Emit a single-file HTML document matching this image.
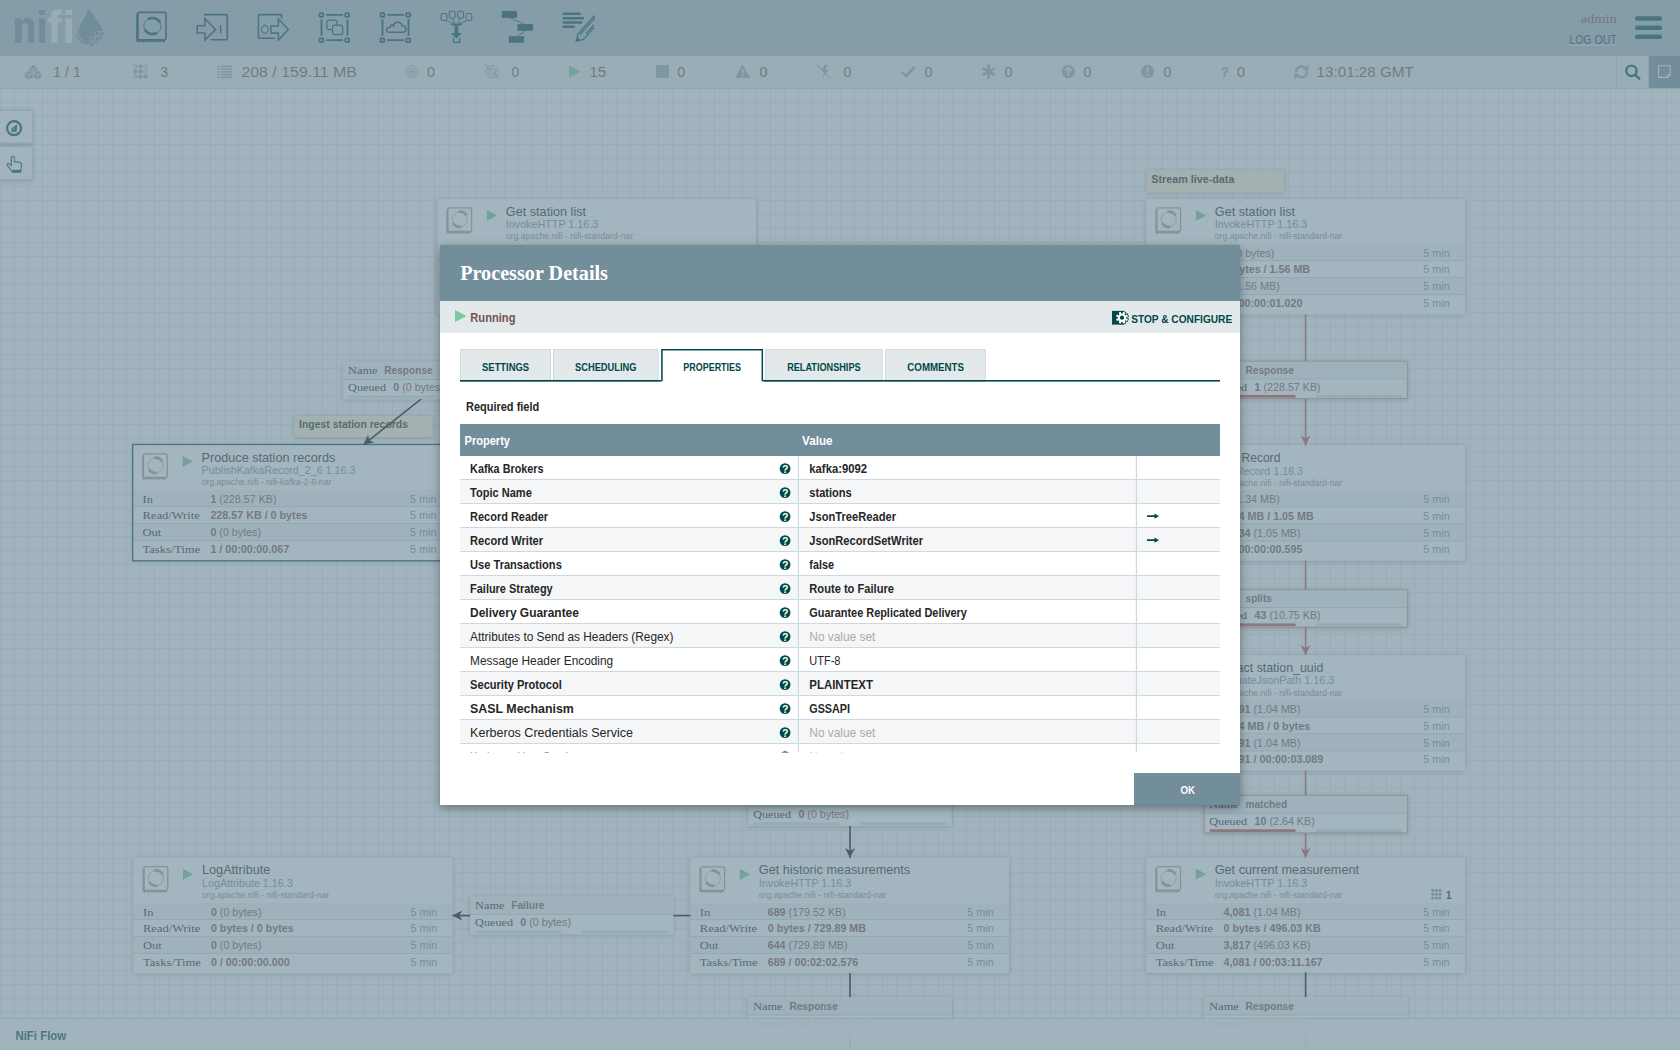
<!DOCTYPE html><html><head><meta charset="utf-8"><title>NiFi Flow</title><style>
*{margin:0;padding:0;box-sizing:border-box}
html,body{width:1680px;height:1050px;overflow:hidden;background:#f9fafb;font-family:"Liberation Sans",sans-serif}
.abs{position:absolute}
svg{position:absolute;left:0;top:0;overflow:visible}
text.a{font-family:"Liberation Sans",sans-serif}
text.b{font-family:"Liberation Serif",serif}
#canvas{left:0;top:88px;width:1680px;height:962px;background-color:#f9fafb;
 background-image:linear-gradient(to right,#e4e9ec 1px,transparent 1px),linear-gradient(to bottom,#e4e9ec 1px,transparent 1px);
 background-size:14px 14px;background-position:0 0}
#header{left:0;top:0;width:1680px;height:56px;background:#aabbc3}
#status{left:0;top:56px;width:1680px;height:33px;background:#e3e8eb;border-bottom:1px solid #c7d2d7}
#crumbs{left:0;top:1018px;width:1680px;height:32px;background:rgba(249,250,251,0.92);border-top:1px solid #c7d2d7}
#glass{left:0;top:0;width:1680px;height:1050px;background:rgba(114,142,155,0.65)}
#dialog{left:440px;top:245px;width:800px;height:560px;background:#fff;box-shadow:0 3px 9px rgba(0,0,0,0.36)}
</style></head><body>
<div id="canvas" class="abs"></div>
<svg width="1680" height="1050" viewBox="0 0 1680 1050">
<defs><filter id="ds" x="-10%" y="-20%" width="120%" height="150%"><feDropShadow dx="0" dy="0.6" stdDeviation="2.4" flood-color="#000" flood-opacity="0.34"/></filter><marker id="arrD" markerWidth="10" markerHeight="10" refX="10" refY="5" orient="auto" markerUnits="userSpaceOnUse"><path d="M0 0 L10 5 L0 10 L3 5 Z" fill="#000"/></marker><marker id="arrR" markerWidth="10" markerHeight="10" refX="10" refY="5" orient="auto" markerUnits="userSpaceOnUse"><path d="M0 0 L10 5 L0 10 L3 5 Z" fill="#ba554a"/></marker></defs>
<rect x="1146.7" y="170.5" width="137.3" height="21.6" fill="#fff7d7" filter="url(#ds)"/>
<text class="a" x="1151.3" y="182.7" font-size="11" font-weight="bold" fill="#262626" textLength="83.10" lengthAdjust="spacingAndGlyphs">Stream live-data</text>
<rect x="294.5" y="416" width="137.7" height="21" fill="#fff7d7" filter="url(#ds)"/>
<text class="a" x="299.1" y="428.2" font-size="11" font-weight="bold" fill="#262626" textLength="108.90" lengthAdjust="spacingAndGlyphs">Ingest station records</text>
<rect x="437.5" y="199" width="318.5" height="115.3" fill="#fff" filter="url(#ds)"/>
<rect x="437.5" y="244.2" width="318.5" height="16.4" fill="#f4f6f7"/>
<rect x="437.5" y="277.4" width="318.5" height="17.3" fill="#f4f6f7"/>
<rect x="437.5" y="260.3" width="318.5" height="0.8" fill="#c7d2d7"/>
<rect x="437.5" y="277.1" width="318.5" height="0.8" fill="#c7d2d7"/>
<rect x="437.5" y="294.3" width="318.5" height="0.8" fill="#c7d2d7"/>
<g fill="none" stroke="#ad9897"><rect x="447.7" y="207.9" width="23.9" height="23.6" rx="1.8" stroke-width="1.3"/><path d="M447.40000000000003 209.4 V232.2 H470.8" stroke-width="1.9"/><path d="M446.2 210.1 h1.2 M446.2 214.0 h1.2 M446.2 217.9 h1.2 M446.2 221.79999999999998 h1.2 M446.2 225.7 h1.2 M446.2 229.6 h1.2 M448.3 233.2 v1.2 M452.2 233.2 v1.2 M456.1 233.2 v1.2 M460.0 233.2 v1.2 M463.90000000000003 233.2 v1.2 M467.8 233.2 v1.2" stroke-width="1"/><circle cx="459.8" cy="219.29999999999998" r="7.6" stroke-width="0.7"/><path d="M458.48 211.82 A7.6 7.6 0 0 1 466.38 215.50" stroke-width="2.7"/><path d="M461.12 226.78 A7.6 7.6 0 0 1 453.22 223.10" stroke-width="2.7"/></g>
<path d="M486.8 209.9 L497.1 215.4 L486.8 221 Z" fill="#7dc7a0"/>
<text class="a" x="505.8" y="215.5" font-size="12.8" fill="#262626" textLength="80.27" lengthAdjust="spacingAndGlyphs">Get station list</text>
<text class="a" x="505.8" y="228.2" font-size="11.3" fill="#728e9b" textLength="92.46" lengthAdjust="spacingAndGlyphs">InvokeHTTP 1.16.3</text>
<text class="a" x="505.8" y="239.4" font-size="8.9" fill="#8a8a8a" textLength="127.46" lengthAdjust="spacingAndGlyphs">org.apache.nifi - nifi-standard-nar</text>
<text class="b" x="446.8" y="257.0" font-size="11" fill="#262626" textLength="10.45" lengthAdjust="spacingAndGlyphs">In</text>
<text class="a" x="514.7" y="257.0" font-size="11" fill="#775351" textLength="50.67" lengthAdjust="spacingAndGlyphs"><tspan font-weight="bold">0</tspan> (0 bytes)</text>
<text class="a" x="740.7" y="257.0" font-size="11" fill="#728e9b" text-anchor="end" textLength="26.36" lengthAdjust="spacingAndGlyphs">5 min</text>
<text class="b" x="446.8" y="273.4" font-size="11" fill="#262626" textLength="57.29" lengthAdjust="spacingAndGlyphs">Read/Write</text>
<text class="a" x="514.7" y="273.4" font-size="11" font-weight="bold" fill="#775351" textLength="82.86" lengthAdjust="spacingAndGlyphs">0 bytes / 0 bytes</text>
<text class="a" x="740.7" y="273.4" font-size="11" fill="#728e9b" text-anchor="end" textLength="26.36" lengthAdjust="spacingAndGlyphs">5 min</text>
<text class="b" x="446.8" y="290.4" font-size="11" fill="#262626" textLength="18.81" lengthAdjust="spacingAndGlyphs">Out</text>
<text class="a" x="514.7" y="290.4" font-size="11" fill="#775351" textLength="50.67" lengthAdjust="spacingAndGlyphs"><tspan font-weight="bold">0</tspan> (0 bytes)</text>
<text class="a" x="740.7" y="290.4" font-size="11" fill="#728e9b" text-anchor="end" textLength="26.36" lengthAdjust="spacingAndGlyphs">5 min</text>
<text class="b" x="446.8" y="307.0" font-size="11" fill="#262626" textLength="57.89" lengthAdjust="spacingAndGlyphs">Tasks/Time</text>
<text class="a" x="514.7" y="307.0" font-size="11" font-weight="bold" fill="#775351" textLength="78.71" lengthAdjust="spacingAndGlyphs">0 / 00:00:00.000</text>
<text class="a" x="740.7" y="307.0" font-size="11" fill="#728e9b" text-anchor="end" textLength="26.36" lengthAdjust="spacingAndGlyphs">5 min</text>
<rect x="1146.5" y="199" width="318.5" height="115.3" fill="#fff" filter="url(#ds)"/>
<rect x="1146.5" y="244.2" width="318.5" height="16.4" fill="#f4f6f7"/>
<rect x="1146.5" y="277.4" width="318.5" height="17.3" fill="#f4f6f7"/>
<rect x="1146.5" y="260.3" width="318.5" height="0.8" fill="#c7d2d7"/>
<rect x="1146.5" y="277.1" width="318.5" height="0.8" fill="#c7d2d7"/>
<rect x="1146.5" y="294.3" width="318.5" height="0.8" fill="#c7d2d7"/>
<g fill="none" stroke="#ad9897"><rect x="1156.7" y="207.9" width="23.9" height="23.6" rx="1.8" stroke-width="1.3"/><path d="M1156.3999999999999 209.4 V232.2 H1179.8" stroke-width="1.9"/><path d="M1155.2 210.1 h1.2 M1155.2 214.0 h1.2 M1155.2 217.9 h1.2 M1155.2 221.79999999999998 h1.2 M1155.2 225.7 h1.2 M1155.2 229.6 h1.2 M1157.3 233.2 v1.2 M1161.2 233.2 v1.2 M1165.1 233.2 v1.2 M1169.0 233.2 v1.2 M1172.8999999999999 233.2 v1.2 M1176.8 233.2 v1.2" stroke-width="1"/><circle cx="1168.8" cy="219.29999999999998" r="7.6" stroke-width="0.7"/><path d="M1167.48 211.82 A7.6 7.6 0 0 1 1175.38 215.50" stroke-width="2.7"/><path d="M1170.12 226.78 A7.6 7.6 0 0 1 1162.22 223.10" stroke-width="2.7"/></g>
<path d="M1195.8 209.9 L1206.1 215.4 L1195.8 221 Z" fill="#7dc7a0"/>
<text class="a" x="1214.8" y="215.5" font-size="12.8" fill="#262626" textLength="80.27" lengthAdjust="spacingAndGlyphs">Get station list</text>
<text class="a" x="1214.8" y="228.2" font-size="11.3" fill="#728e9b" textLength="92.46" lengthAdjust="spacingAndGlyphs">InvokeHTTP 1.16.3</text>
<text class="a" x="1214.8" y="239.4" font-size="8.9" fill="#8a8a8a" textLength="127.46" lengthAdjust="spacingAndGlyphs">org.apache.nifi - nifi-standard-nar</text>
<text class="b" x="1155.8" y="257.0" font-size="11" fill="#262626" textLength="10.45" lengthAdjust="spacingAndGlyphs">In</text>
<text class="a" x="1223.7" y="257.0" font-size="11" fill="#775351" textLength="50.67" lengthAdjust="spacingAndGlyphs"><tspan font-weight="bold">0</tspan> (0 bytes)</text>
<text class="a" x="1449.7" y="257.0" font-size="11" fill="#728e9b" text-anchor="end" textLength="26.36" lengthAdjust="spacingAndGlyphs">5 min</text>
<text class="b" x="1155.8" y="273.4" font-size="11" fill="#262626" textLength="57.29" lengthAdjust="spacingAndGlyphs">Read/Write</text>
<text class="a" x="1223.7" y="273.4" font-size="11" font-weight="bold" fill="#775351" textLength="86.43" lengthAdjust="spacingAndGlyphs">0 bytes / 1.56 MB</text>
<text class="a" x="1449.7" y="273.4" font-size="11" fill="#728e9b" text-anchor="end" textLength="26.36" lengthAdjust="spacingAndGlyphs">5 min</text>
<text class="b" x="1155.8" y="290.4" font-size="11" fill="#262626" textLength="18.81" lengthAdjust="spacingAndGlyphs">Out</text>
<text class="a" x="1223.7" y="290.4" font-size="11" fill="#775351" textLength="56.03" lengthAdjust="spacingAndGlyphs"><tspan font-weight="bold">1</tspan> (1.56 MB)</text>
<text class="a" x="1449.7" y="290.4" font-size="11" fill="#728e9b" text-anchor="end" textLength="26.36" lengthAdjust="spacingAndGlyphs">5 min</text>
<text class="b" x="1155.8" y="307.0" font-size="11" fill="#262626" textLength="57.89" lengthAdjust="spacingAndGlyphs">Tasks/Time</text>
<text class="a" x="1223.7" y="307.0" font-size="11" font-weight="bold" fill="#775351" textLength="78.71" lengthAdjust="spacingAndGlyphs">1 / 00:00:01.020</text>
<text class="a" x="1449.7" y="307.0" font-size="11" fill="#728e9b" text-anchor="end" textLength="26.36" lengthAdjust="spacingAndGlyphs">5 min</text>
<rect x="133.2" y="445" width="318.5" height="115.3" fill="#fff" filter="url(#ds)"/>
<rect x="133.2" y="490.2" width="318.5" height="16.4" fill="#f4f6f7"/>
<rect x="133.2" y="523.4" width="318.5" height="17.3" fill="#f4f6f7"/>
<rect x="133.2" y="506.3" width="318.5" height="0.8" fill="#c7d2d7"/>
<rect x="133.2" y="523.1" width="318.5" height="0.8" fill="#c7d2d7"/>
<rect x="133.2" y="540.3" width="318.5" height="0.8" fill="#c7d2d7"/>
<rect x="132.7" y="444.5" width="319.5" height="116.3" fill="none" stroke="#004849" stroke-width="1.3"/>
<g fill="none" stroke="#ad9897"><rect x="143.4" y="453.90000000000003" width="23.9" height="23.6" rx="1.8" stroke-width="1.3"/><path d="M143.1 455.40000000000003 V478.20000000000005 H166.5" stroke-width="1.9"/><path d="M141.9 456.1 h1.2 M141.9 460.0 h1.2 M141.9 463.90000000000003 h1.2 M141.9 467.8 h1.2 M141.9 471.70000000000005 h1.2 M141.9 475.6 h1.2 M144.0 479.20000000000005 v1.2 M147.9 479.20000000000005 v1.2 M151.8 479.20000000000005 v1.2 M155.7 479.20000000000005 v1.2 M159.6 479.20000000000005 v1.2 M163.5 479.20000000000005 v1.2" stroke-width="1"/><circle cx="155.5" cy="465.3" r="7.6" stroke-width="0.7"/><path d="M154.18 457.82 A7.6 7.6 0 0 1 162.08 461.50" stroke-width="2.7"/><path d="M156.82 472.78 A7.6 7.6 0 0 1 148.92 469.10" stroke-width="2.7"/></g>
<path d="M182.5 455.9 L192.79999999999998 461.4 L182.5 467 Z" fill="#7dc7a0"/>
<text class="a" x="201.5" y="461.5" font-size="12.8" fill="#262626" textLength="133.80" lengthAdjust="spacingAndGlyphs">Produce station records</text>
<text class="a" x="201.5" y="474.2" font-size="11.3" fill="#728e9b" textLength="153.93" lengthAdjust="spacingAndGlyphs">PublishKafkaRecord_2_6 1.16.3</text>
<text class="a" x="201.5" y="485.4" font-size="8.9" fill="#8a8a8a" textLength="129.86" lengthAdjust="spacingAndGlyphs">org.apache.nifi - nifi-kafka-2-6-nar</text>
<text class="b" x="142.5" y="503.0" font-size="11" fill="#262626" textLength="10.45" lengthAdjust="spacingAndGlyphs">In</text>
<text class="a" x="210.4" y="503.0" font-size="11" fill="#775351" textLength="66.18" lengthAdjust="spacingAndGlyphs"><tspan font-weight="bold">1</tspan> (228.57 KB)</text>
<text class="a" x="436.4" y="503.0" font-size="11" fill="#728e9b" text-anchor="end" textLength="26.36" lengthAdjust="spacingAndGlyphs">5 min</text>
<text class="b" x="142.5" y="519.4" font-size="11" fill="#262626" textLength="57.29" lengthAdjust="spacingAndGlyphs">Read/Write</text>
<text class="a" x="210.4" y="519.4" font-size="11" font-weight="bold" fill="#775351" textLength="97.17" lengthAdjust="spacingAndGlyphs">228.57 KB / 0 bytes</text>
<text class="a" x="436.4" y="519.4" font-size="11" fill="#728e9b" text-anchor="end" textLength="26.36" lengthAdjust="spacingAndGlyphs">5 min</text>
<text class="b" x="142.5" y="536.4" font-size="11" fill="#262626" textLength="18.81" lengthAdjust="spacingAndGlyphs">Out</text>
<text class="a" x="210.4" y="536.4" font-size="11" fill="#775351" textLength="50.67" lengthAdjust="spacingAndGlyphs"><tspan font-weight="bold">0</tspan> (0 bytes)</text>
<text class="a" x="436.4" y="536.4" font-size="11" fill="#728e9b" text-anchor="end" textLength="26.36" lengthAdjust="spacingAndGlyphs">5 min</text>
<text class="b" x="142.5" y="553.0" font-size="11" fill="#262626" textLength="57.89" lengthAdjust="spacingAndGlyphs">Tasks/Time</text>
<text class="a" x="210.4" y="553.0" font-size="11" font-weight="bold" fill="#775351" textLength="78.71" lengthAdjust="spacingAndGlyphs">1 / 00:00:00.067</text>
<text class="a" x="436.4" y="553.0" font-size="11" fill="#728e9b" text-anchor="end" textLength="26.36" lengthAdjust="spacingAndGlyphs">5 min</text>
<rect x="1146.5" y="445.3" width="318.5" height="115.3" fill="#fff" filter="url(#ds)"/>
<rect x="1146.5" y="490.5" width="318.5" height="16.4" fill="#f4f6f7"/>
<rect x="1146.5" y="523.7" width="318.5" height="17.3" fill="#f4f6f7"/>
<rect x="1146.5" y="506.6" width="318.5" height="0.8" fill="#c7d2d7"/>
<rect x="1146.5" y="523.4" width="318.5" height="0.8" fill="#c7d2d7"/>
<rect x="1146.5" y="540.6" width="318.5" height="0.8" fill="#c7d2d7"/>
<g fill="none" stroke="#ad9897"><rect x="1156.7" y="454.20000000000005" width="23.9" height="23.6" rx="1.8" stroke-width="1.3"/><path d="M1156.3999999999999 455.70000000000005 V478.50000000000006 H1179.8" stroke-width="1.9"/><path d="M1155.2 456.40000000000003 h1.2 M1155.2 460.3 h1.2 M1155.2 464.20000000000005 h1.2 M1155.2 468.1 h1.2 M1155.2 472.00000000000006 h1.2 M1155.2 475.90000000000003 h1.2 M1157.3 479.50000000000006 v1.2 M1161.2 479.50000000000006 v1.2 M1165.1 479.50000000000006 v1.2 M1169.0 479.50000000000006 v1.2 M1172.8999999999999 479.50000000000006 v1.2 M1176.8 479.50000000000006 v1.2" stroke-width="1"/><circle cx="1168.8" cy="465.6" r="7.6" stroke-width="0.7"/><path d="M1167.48 458.12 A7.6 7.6 0 0 1 1175.38 461.80" stroke-width="2.7"/><path d="M1170.12 473.08 A7.6 7.6 0 0 1 1162.22 469.40" stroke-width="2.7"/></g>
<path d="M1195.8 456.2 L1206.1 461.7 L1195.8 467.3 Z" fill="#7dc7a0"/>
<text class="a" x="1214.8" y="461.8" font-size="12.8" fill="#262626" textLength="65.52" lengthAdjust="spacingAndGlyphs">Split Record</text>
<text class="a" x="1214.8" y="474.5" font-size="11.3" fill="#728e9b" textLength="88.29" lengthAdjust="spacingAndGlyphs">SplitRecord 1.16.3</text>
<text class="a" x="1214.8" y="485.7" font-size="8.9" fill="#8a8a8a" textLength="127.46" lengthAdjust="spacingAndGlyphs">org.apache.nifi - nifi-standard-nar</text>
<text class="b" x="1155.8" y="503.3" font-size="11" fill="#262626" textLength="10.45" lengthAdjust="spacingAndGlyphs">In</text>
<text class="a" x="1223.7" y="503.3" font-size="11" fill="#775351" textLength="56.03" lengthAdjust="spacingAndGlyphs"><tspan font-weight="bold">1</tspan> (1.34 MB)</text>
<text class="a" x="1449.7" y="503.3" font-size="11" fill="#728e9b" text-anchor="end" textLength="26.36" lengthAdjust="spacingAndGlyphs">5 min</text>
<text class="b" x="1155.8" y="519.7" font-size="11" fill="#262626" textLength="57.29" lengthAdjust="spacingAndGlyphs">Read/Write</text>
<text class="a" x="1223.7" y="519.7" font-size="11" font-weight="bold" fill="#775351" textLength="90.01" lengthAdjust="spacingAndGlyphs">1.34 MB / 1.05 MB</text>
<text class="a" x="1449.7" y="519.7" font-size="11" fill="#728e9b" text-anchor="end" textLength="26.36" lengthAdjust="spacingAndGlyphs">5 min</text>
<text class="b" x="1155.8" y="536.7" font-size="11" fill="#262626" textLength="18.81" lengthAdjust="spacingAndGlyphs">Out</text>
<text class="a" x="1223.7" y="536.7" font-size="11" fill="#775351" textLength="76.90" lengthAdjust="spacingAndGlyphs"><tspan font-weight="bold">4,334</tspan> (1.05 MB)</text>
<text class="a" x="1449.7" y="536.7" font-size="11" fill="#728e9b" text-anchor="end" textLength="26.36" lengthAdjust="spacingAndGlyphs">5 min</text>
<text class="b" x="1155.8" y="553.3" font-size="11" fill="#262626" textLength="57.89" lengthAdjust="spacingAndGlyphs">Tasks/Time</text>
<text class="a" x="1223.7" y="553.3" font-size="11" font-weight="bold" fill="#775351" textLength="78.71" lengthAdjust="spacingAndGlyphs">1 / 00:00:00.595</text>
<text class="a" x="1449.7" y="553.3" font-size="11" fill="#728e9b" text-anchor="end" textLength="26.36" lengthAdjust="spacingAndGlyphs">5 min</text>
<rect x="1146.5" y="655.2" width="318.5" height="115.3" fill="#fff" filter="url(#ds)"/>
<rect x="1146.5" y="700.4000000000001" width="318.5" height="16.4" fill="#f4f6f7"/>
<rect x="1146.5" y="733.6" width="318.5" height="17.3" fill="#f4f6f7"/>
<rect x="1146.5" y="716.5" width="318.5" height="0.8" fill="#c7d2d7"/>
<rect x="1146.5" y="733.3000000000001" width="318.5" height="0.8" fill="#c7d2d7"/>
<rect x="1146.5" y="750.5" width="318.5" height="0.8" fill="#c7d2d7"/>
<g fill="none" stroke="#ad9897"><rect x="1156.7" y="664.1" width="23.9" height="23.6" rx="1.8" stroke-width="1.3"/><path d="M1156.3999999999999 665.6 V688.4000000000001 H1179.8" stroke-width="1.9"/><path d="M1155.2 666.3000000000001 h1.2 M1155.2 670.2 h1.2 M1155.2 674.1 h1.2 M1155.2 678.0000000000001 h1.2 M1155.2 681.9000000000001 h1.2 M1155.2 685.8000000000001 h1.2 M1157.3 689.4000000000001 v1.2 M1161.2 689.4000000000001 v1.2 M1165.1 689.4000000000001 v1.2 M1169.0 689.4000000000001 v1.2 M1172.8999999999999 689.4000000000001 v1.2 M1176.8 689.4000000000001 v1.2" stroke-width="1"/><circle cx="1168.8" cy="675.5000000000001" r="7.6" stroke-width="0.7"/><path d="M1167.48 668.02 A7.6 7.6 0 0 1 1175.38 671.70" stroke-width="2.7"/><path d="M1170.12 682.98 A7.6 7.6 0 0 1 1162.22 679.30" stroke-width="2.7"/></g>
<path d="M1195.8 666.1 L1206.1 671.6 L1195.8 677.2 Z" fill="#7dc7a0"/>
<text class="a" x="1214.8" y="671.7" font-size="12.8" fill="#262626" textLength="108.46" lengthAdjust="spacingAndGlyphs">Extract station_uuid</text>
<text class="a" x="1214.8" y="684.4" font-size="11.3" fill="#728e9b" textLength="119.33" lengthAdjust="spacingAndGlyphs">EvaluateJsonPath 1.16.3</text>
<text class="a" x="1214.8" y="695.6" font-size="8.9" fill="#8a8a8a" textLength="127.46" lengthAdjust="spacingAndGlyphs">org.apache.nifi - nifi-standard-nar</text>
<text class="b" x="1155.8" y="713.2" font-size="11" fill="#262626" textLength="10.45" lengthAdjust="spacingAndGlyphs">In</text>
<text class="a" x="1223.7" y="713.2" font-size="11" fill="#775351" textLength="76.90" lengthAdjust="spacingAndGlyphs"><tspan font-weight="bold">4,091</tspan> (1.04 MB)</text>
<text class="a" x="1449.7" y="713.2" font-size="11" fill="#728e9b" text-anchor="end" textLength="26.36" lengthAdjust="spacingAndGlyphs">5 min</text>
<text class="b" x="1155.8" y="729.6" font-size="11" fill="#262626" textLength="57.29" lengthAdjust="spacingAndGlyphs">Read/Write</text>
<text class="a" x="1223.7" y="729.6" font-size="11" font-weight="bold" fill="#775351" textLength="86.43" lengthAdjust="spacingAndGlyphs">1.04 MB / 0 bytes</text>
<text class="a" x="1449.7" y="729.6" font-size="11" fill="#728e9b" text-anchor="end" textLength="26.36" lengthAdjust="spacingAndGlyphs">5 min</text>
<text class="b" x="1155.8" y="746.6" font-size="11" fill="#262626" textLength="18.81" lengthAdjust="spacingAndGlyphs">Out</text>
<text class="a" x="1223.7" y="746.6" font-size="11" fill="#775351" textLength="76.90" lengthAdjust="spacingAndGlyphs"><tspan font-weight="bold">4,091</tspan> (1.04 MB)</text>
<text class="a" x="1449.7" y="746.6" font-size="11" fill="#728e9b" text-anchor="end" textLength="26.36" lengthAdjust="spacingAndGlyphs">5 min</text>
<text class="b" x="1155.8" y="763.2" font-size="11" fill="#262626" textLength="57.89" lengthAdjust="spacingAndGlyphs">Tasks/Time</text>
<text class="a" x="1223.7" y="763.2" font-size="11" font-weight="bold" fill="#775351" textLength="99.58" lengthAdjust="spacingAndGlyphs">4,091 / 00:00:03.089</text>
<text class="a" x="1449.7" y="763.2" font-size="11" fill="#728e9b" text-anchor="end" textLength="26.36" lengthAdjust="spacingAndGlyphs">5 min</text>
<rect x="133.7" y="857.8" width="318.5" height="115.3" fill="#fff" filter="url(#ds)"/>
<rect x="133.7" y="903.0" width="318.5" height="16.4" fill="#f4f6f7"/>
<rect x="133.7" y="936.1999999999999" width="318.5" height="17.3" fill="#f4f6f7"/>
<rect x="133.7" y="919.0999999999999" width="318.5" height="0.8" fill="#c7d2d7"/>
<rect x="133.7" y="935.9" width="318.5" height="0.8" fill="#c7d2d7"/>
<rect x="133.7" y="953.0999999999999" width="318.5" height="0.8" fill="#c7d2d7"/>
<g fill="none" stroke="#ad9897"><rect x="143.9" y="866.6999999999999" width="23.9" height="23.6" rx="1.8" stroke-width="1.3"/><path d="M143.6 868.1999999999999 V891.0 H167.0" stroke-width="1.9"/><path d="M142.4 868.9 h1.2 M142.4 872.8 h1.2 M142.4 876.6999999999999 h1.2 M142.4 880.6 h1.2 M142.4 884.5 h1.2 M142.4 888.4 h1.2 M144.5 892.0 v1.2 M148.4 892.0 v1.2 M152.3 892.0 v1.2 M156.2 892.0 v1.2 M160.1 892.0 v1.2 M164.0 892.0 v1.2" stroke-width="1"/><circle cx="156.0" cy="878.1" r="7.6" stroke-width="0.7"/><path d="M154.68 870.62 A7.6 7.6 0 0 1 162.58 874.30" stroke-width="2.7"/><path d="M157.32 885.58 A7.6 7.6 0 0 1 149.42 881.90" stroke-width="2.7"/></g>
<path d="M183.0 868.6999999999999 L193.29999999999998 874.1999999999999 L183.0 879.8 Z" fill="#7dc7a0"/>
<text class="a" x="202.0" y="874.3" font-size="12.8" fill="#262626" textLength="68.32" lengthAdjust="spacingAndGlyphs">LogAttribute</text>
<text class="a" x="202.0" y="887.0" font-size="11.3" fill="#728e9b" textLength="90.69" lengthAdjust="spacingAndGlyphs">LogAttribute 1.16.3</text>
<text class="a" x="202.0" y="898.2" font-size="8.9" fill="#8a8a8a" textLength="127.46" lengthAdjust="spacingAndGlyphs">org.apache.nifi - nifi-standard-nar</text>
<text class="b" x="143.0" y="915.8" font-size="11" fill="#262626" textLength="10.45" lengthAdjust="spacingAndGlyphs">In</text>
<text class="a" x="210.9" y="915.8" font-size="11" fill="#775351" textLength="50.67" lengthAdjust="spacingAndGlyphs"><tspan font-weight="bold">0</tspan> (0 bytes)</text>
<text class="a" x="436.9" y="915.8" font-size="11" fill="#728e9b" text-anchor="end" textLength="26.36" lengthAdjust="spacingAndGlyphs">5 min</text>
<text class="b" x="143.0" y="932.2" font-size="11" fill="#262626" textLength="57.29" lengthAdjust="spacingAndGlyphs">Read/Write</text>
<text class="a" x="210.9" y="932.2" font-size="11" font-weight="bold" fill="#775351" textLength="82.86" lengthAdjust="spacingAndGlyphs">0 bytes / 0 bytes</text>
<text class="a" x="436.9" y="932.2" font-size="11" fill="#728e9b" text-anchor="end" textLength="26.36" lengthAdjust="spacingAndGlyphs">5 min</text>
<text class="b" x="143.0" y="949.2" font-size="11" fill="#262626" textLength="18.81" lengthAdjust="spacingAndGlyphs">Out</text>
<text class="a" x="210.9" y="949.2" font-size="11" fill="#775351" textLength="50.67" lengthAdjust="spacingAndGlyphs"><tspan font-weight="bold">0</tspan> (0 bytes)</text>
<text class="a" x="436.9" y="949.2" font-size="11" fill="#728e9b" text-anchor="end" textLength="26.36" lengthAdjust="spacingAndGlyphs">5 min</text>
<text class="b" x="143.0" y="965.8" font-size="11" fill="#262626" textLength="57.89" lengthAdjust="spacingAndGlyphs">Tasks/Time</text>
<text class="a" x="210.9" y="965.8" font-size="11" font-weight="bold" fill="#775351" textLength="78.71" lengthAdjust="spacingAndGlyphs">0 / 00:00:00.000</text>
<text class="a" x="436.9" y="965.8" font-size="11" fill="#728e9b" text-anchor="end" textLength="26.36" lengthAdjust="spacingAndGlyphs">5 min</text>
<rect x="690.5" y="857.9" width="318.5" height="115.3" fill="#fff" filter="url(#ds)"/>
<rect x="690.5" y="903.1" width="318.5" height="16.4" fill="#f4f6f7"/>
<rect x="690.5" y="936.3" width="318.5" height="17.3" fill="#f4f6f7"/>
<rect x="690.5" y="919.1999999999999" width="318.5" height="0.8" fill="#c7d2d7"/>
<rect x="690.5" y="936.0" width="318.5" height="0.8" fill="#c7d2d7"/>
<rect x="690.5" y="953.1999999999999" width="318.5" height="0.8" fill="#c7d2d7"/>
<g fill="none" stroke="#ad9897"><rect x="700.6999999999999" y="866.8" width="23.9" height="23.6" rx="1.8" stroke-width="1.3"/><path d="M700.4 868.3 V891.1 H723.8" stroke-width="1.9"/><path d="M699.1999999999999 869.0 h1.2 M699.1999999999999 872.9 h1.2 M699.1999999999999 876.8 h1.2 M699.1999999999999 880.7 h1.2 M699.1999999999999 884.6 h1.2 M699.1999999999999 888.5 h1.2 M701.3 892.1 v1.2 M705.1999999999999 892.1 v1.2 M709.0999999999999 892.1 v1.2 M713.0 892.1 v1.2 M716.9 892.1 v1.2 M720.8 892.1 v1.2" stroke-width="1"/><circle cx="712.8" cy="878.2" r="7.6" stroke-width="0.7"/><path d="M711.48 870.72 A7.6 7.6 0 0 1 719.38 874.40" stroke-width="2.7"/><path d="M714.12 885.68 A7.6 7.6 0 0 1 706.22 882.00" stroke-width="2.7"/></g>
<path d="M739.8 868.8 L750.1 874.3 L739.8 879.9 Z" fill="#7dc7a0"/>
<text class="a" x="758.8" y="874.4" font-size="12.8" fill="#262626" textLength="151.38" lengthAdjust="spacingAndGlyphs">Get historic measurements</text>
<text class="a" x="758.8" y="887.1" font-size="11.3" fill="#728e9b" textLength="92.46" lengthAdjust="spacingAndGlyphs">InvokeHTTP 1.16.3</text>
<text class="a" x="758.8" y="898.3" font-size="8.9" fill="#8a8a8a" textLength="127.46" lengthAdjust="spacingAndGlyphs">org.apache.nifi - nifi-standard-nar</text>
<text class="b" x="699.8" y="915.9" font-size="11" fill="#262626" textLength="10.45" lengthAdjust="spacingAndGlyphs">In</text>
<text class="a" x="767.7" y="915.9" font-size="11" fill="#775351" textLength="78.11" lengthAdjust="spacingAndGlyphs"><tspan font-weight="bold">689</tspan> (179.52 KB)</text>
<text class="a" x="993.7" y="915.9" font-size="11" fill="#728e9b" text-anchor="end" textLength="26.36" lengthAdjust="spacingAndGlyphs">5 min</text>
<text class="b" x="699.8" y="932.3" font-size="11" fill="#262626" textLength="57.29" lengthAdjust="spacingAndGlyphs">Read/Write</text>
<text class="a" x="767.7" y="932.3" font-size="11" font-weight="bold" fill="#775351" textLength="98.36" lengthAdjust="spacingAndGlyphs">0 bytes / 729.89 MB</text>
<text class="a" x="993.7" y="932.3" font-size="11" fill="#728e9b" text-anchor="end" textLength="26.36" lengthAdjust="spacingAndGlyphs">5 min</text>
<text class="b" x="699.8" y="949.3" font-size="11" fill="#262626" textLength="18.81" lengthAdjust="spacingAndGlyphs">Out</text>
<text class="a" x="767.7" y="949.3" font-size="11" fill="#775351" textLength="79.89" lengthAdjust="spacingAndGlyphs"><tspan font-weight="bold">644</tspan> (729.89 MB)</text>
<text class="a" x="993.7" y="949.3" font-size="11" fill="#728e9b" text-anchor="end" textLength="26.36" lengthAdjust="spacingAndGlyphs">5 min</text>
<text class="b" x="699.8" y="965.9" font-size="11" fill="#262626" textLength="57.89" lengthAdjust="spacingAndGlyphs">Tasks/Time</text>
<text class="a" x="767.7" y="965.9" font-size="11" font-weight="bold" fill="#775351" textLength="90.64" lengthAdjust="spacingAndGlyphs">689 / 00:02:02.576</text>
<text class="a" x="993.7" y="965.9" font-size="11" fill="#728e9b" text-anchor="end" textLength="26.36" lengthAdjust="spacingAndGlyphs">5 min</text>
<rect x="1146.4" y="857.7" width="318.5" height="115.3" fill="#fff" filter="url(#ds)"/>
<rect x="1146.4" y="902.9000000000001" width="318.5" height="16.4" fill="#f4f6f7"/>
<rect x="1146.4" y="936.1" width="318.5" height="17.3" fill="#f4f6f7"/>
<rect x="1146.4" y="919.0" width="318.5" height="0.8" fill="#c7d2d7"/>
<rect x="1146.4" y="935.8000000000001" width="318.5" height="0.8" fill="#c7d2d7"/>
<rect x="1146.4" y="953.0" width="318.5" height="0.8" fill="#c7d2d7"/>
<g fill="none" stroke="#ad9897"><rect x="1156.6000000000001" y="866.6" width="23.9" height="23.6" rx="1.8" stroke-width="1.3"/><path d="M1156.3 868.1 V890.9000000000001 H1179.7" stroke-width="1.9"/><path d="M1155.1000000000001 868.8000000000001 h1.2 M1155.1000000000001 872.7 h1.2 M1155.1000000000001 876.6 h1.2 M1155.1000000000001 880.5000000000001 h1.2 M1155.1000000000001 884.4000000000001 h1.2 M1155.1000000000001 888.3000000000001 h1.2 M1157.2 891.9000000000001 v1.2 M1161.1000000000001 891.9000000000001 v1.2 M1165.0 891.9000000000001 v1.2 M1168.9 891.9000000000001 v1.2 M1172.8 891.9000000000001 v1.2 M1176.7 891.9000000000001 v1.2" stroke-width="1"/><circle cx="1168.7" cy="878.0000000000001" r="7.6" stroke-width="0.7"/><path d="M1167.38 870.52 A7.6 7.6 0 0 1 1175.28 874.20" stroke-width="2.7"/><path d="M1170.02 885.48 A7.6 7.6 0 0 1 1162.12 881.80" stroke-width="2.7"/></g>
<path d="M1195.7 868.6 L1206.0 874.1 L1195.7 879.7 Z" fill="#7dc7a0"/>
<text class="a" x="1214.7" y="874.2" font-size="12.8" fill="#262626" textLength="144.34" lengthAdjust="spacingAndGlyphs">Get current measurement</text>
<text class="a" x="1214.7" y="886.9" font-size="11.3" fill="#728e9b" textLength="92.46" lengthAdjust="spacingAndGlyphs">InvokeHTTP 1.16.3</text>
<text class="a" x="1214.7" y="898.1" font-size="8.9" fill="#8a8a8a" textLength="127.46" lengthAdjust="spacingAndGlyphs">org.apache.nifi - nifi-standard-nar</text>
<text class="b" x="1155.7" y="915.7" font-size="11" fill="#262626" textLength="10.45" lengthAdjust="spacingAndGlyphs">In</text>
<text class="a" x="1223.6" y="915.7" font-size="11" fill="#775351" textLength="76.90" lengthAdjust="spacingAndGlyphs"><tspan font-weight="bold">4,081</tspan> (1.04 MB)</text>
<text class="a" x="1449.6" y="915.7" font-size="11" fill="#728e9b" text-anchor="end" textLength="26.36" lengthAdjust="spacingAndGlyphs">5 min</text>
<text class="b" x="1155.7" y="932.1" font-size="11" fill="#262626" textLength="57.29" lengthAdjust="spacingAndGlyphs">Read/Write</text>
<text class="a" x="1223.6" y="932.1" font-size="11" font-weight="bold" fill="#775351" textLength="97.17" lengthAdjust="spacingAndGlyphs">0 bytes / 496.03 KB</text>
<text class="a" x="1449.6" y="932.1" font-size="11" fill="#728e9b" text-anchor="end" textLength="26.36" lengthAdjust="spacingAndGlyphs">5 min</text>
<text class="b" x="1155.7" y="949.1" font-size="11" fill="#262626" textLength="18.81" lengthAdjust="spacingAndGlyphs">Out</text>
<text class="a" x="1223.6" y="949.1" font-size="11" fill="#775351" textLength="87.05" lengthAdjust="spacingAndGlyphs"><tspan font-weight="bold">3,817</tspan> (496.03 KB)</text>
<text class="a" x="1449.6" y="949.1" font-size="11" fill="#728e9b" text-anchor="end" textLength="26.36" lengthAdjust="spacingAndGlyphs">5 min</text>
<text class="b" x="1155.7" y="965.7" font-size="11" fill="#262626" textLength="57.89" lengthAdjust="spacingAndGlyphs">Tasks/Time</text>
<text class="a" x="1223.6" y="965.7" font-size="11" font-weight="bold" fill="#775351" textLength="98.99" lengthAdjust="spacingAndGlyphs">4,081 / 00:03:11.167</text>
<text class="a" x="1449.6" y="965.7" font-size="11" fill="#728e9b" text-anchor="end" textLength="26.36" lengthAdjust="spacingAndGlyphs">5 min</text>
<circle cx="1432.6" cy="890.5000000000001" r="1.5" fill="#728e9b"/>
<circle cx="1436.3" cy="890.5000000000001" r="1.5" fill="#728e9b"/>
<circle cx="1440.0" cy="890.5000000000001" r="1.5" fill="#728e9b"/>
<circle cx="1432.6" cy="894.3000000000001" r="1.5" fill="#728e9b"/>
<circle cx="1436.3" cy="894.3000000000001" r="1.5" fill="#728e9b"/>
<circle cx="1440.0" cy="894.3000000000001" r="1.5" fill="#728e9b"/>
<circle cx="1432.6" cy="898.1000000000001" r="1.5" fill="#728e9b"/>
<circle cx="1436.3" cy="898.1000000000001" r="1.5" fill="#728e9b"/>
<circle cx="1440.0" cy="898.1000000000001" r="1.5" fill="#728e9b"/>
<text class="a" x="1446.0" y="899.3" font-size="10" font-weight="bold" fill="#262626">1</text>
<path d="M1305.6 314.3 L1305.6 361.3" fill="none" stroke="#ba554a" stroke-width="1.6"/>
<path d="M1305.6 398.6 L1305.6 445.5" fill="none" stroke="#ba554a" stroke-width="1.6" marker-end="url(#arrR)"/>
<path d="M1305.6 560.6 L1305.6 590" fill="none" stroke="#ba554a" stroke-width="1.6"/>
<path d="M1305.6 626.4 L1305.6 655" fill="none" stroke="#ba554a" stroke-width="1.6" marker-end="url(#arrR)"/>
<path d="M1305.6 770.5 L1305.6 795.6" fill="none" stroke="#ba554a" stroke-width="1.6"/>
<path d="M1305.6 833 L1305.6 857.7" fill="none" stroke="#ba554a" stroke-width="1.6" marker-end="url(#arrR)"/>
<path d="M500 300 L500 362" fill="none" stroke="#000" stroke-width="1.6"/>
<path d="M421.7 398.6 L363.5 444.6" fill="none" stroke="#000" stroke-width="1.6" marker-end="url(#arrD)"/>
<path d="M850 700 L850 826" fill="none" stroke="#000" stroke-width="1.6"/>
<path d="M850 825.8 L850 857.9" fill="none" stroke="#000" stroke-width="1.6" marker-end="url(#arrD)"/>
<path d="M850 973 L850 997.5" fill="none" stroke="#000" stroke-width="1.6"/>
<path d="M850 1034 L850 1050" fill="none" stroke="#000" stroke-width="1.6"/>
<path d="M1305.6 972.4 L1305.6 997.5" fill="none" stroke="#000" stroke-width="1.6"/>
<path d="M1305.6 1034 L1305.6 1050" fill="none" stroke="#000" stroke-width="1.6"/>
<path d="M690.5 915.6 L672.9 915.6" fill="none" stroke="#000" stroke-width="1.6"/>
<path d="M470.1 915.6 L452.3 915.6" fill="none" stroke="#000" stroke-width="1.6" marker-end="url(#arrD)"/>
<rect x="343.1" y="361.8" width="203" height="37.3" fill="#fff" filter="url(#ds)"/>
<rect x="343.6" y="362.3" width="202" height="16.8" fill="#f4f6f7"/>
<rect x="343.1" y="379.0" width="203" height="0.9" fill="#c7d2d7"/>
<text class="b" x="348.1" y="374.3" font-size="11" fill="#262626" textLength="29.40" lengthAdjust="spacingAndGlyphs">Name</text>
<text class="a" x="384.3" y="374.3" font-size="11" font-weight="bold" fill="#775351" textLength="48.37" lengthAdjust="spacingAndGlyphs">Response</text>
<text class="b" x="348.1" y="391.1" font-size="11" fill="#262626" textLength="37.90" lengthAdjust="spacingAndGlyphs">Queued</text>
<text class="a" x="393.3" y="391.1" font-size="11" fill="#775351" textLength="50.67" lengthAdjust="spacingAndGlyphs"><tspan font-weight="bold">0</tspan> (0 bytes)</text>
<rect x="348.6" y="395.40000000000003" width="85.8" height="2.8" fill="#d9e1e5"/>
<rect x="454.6" y="395.40000000000003" width="85.8" height="2.8" fill="#d9e1e5"/>
<rect x="1204.3" y="361.3" width="203" height="37.3" fill="#fff" stroke="#ba554a" stroke-width="1.1" stroke-opacity="0.55" filter="url(#ds)"/>
<rect x="1204.8" y="361.8" width="202" height="16.8" fill="#f4f6f7"/>
<rect x="1204.3" y="378.5" width="203" height="0.9" fill="#c7d2d7"/>
<text class="b" x="1209.3" y="373.8" font-size="11" fill="#262626" textLength="29.40" lengthAdjust="spacingAndGlyphs">Name</text>
<text class="a" x="1245.5" y="373.8" font-size="11" font-weight="bold" fill="#775351" textLength="48.37" lengthAdjust="spacingAndGlyphs">Response</text>
<text class="b" x="1209.3" y="390.6" font-size="11" fill="#262626" textLength="37.90" lengthAdjust="spacingAndGlyphs">Queued</text>
<text class="a" x="1254.5" y="390.6" font-size="11" fill="#775351" textLength="66.18" lengthAdjust="spacingAndGlyphs"><tspan font-weight="bold">1</tspan> (228.57 KB)</text>
<rect x="1209.8" y="394.90000000000003" width="85.8" height="2.8" fill="#ba554a"/>
<rect x="1315.8" y="394.90000000000003" width="85.8" height="2.8" fill="#d9e1e5"/>
<rect x="1204.3" y="589.8" width="203" height="37.3" fill="#fff" stroke="#ba554a" stroke-width="1.1" stroke-opacity="0.55" filter="url(#ds)"/>
<rect x="1204.8" y="590.3" width="202" height="16.8" fill="#f4f6f7"/>
<rect x="1204.3" y="607.0" width="203" height="0.9" fill="#c7d2d7"/>
<text class="b" x="1209.3" y="602.3" font-size="11" fill="#262626" textLength="29.40" lengthAdjust="spacingAndGlyphs">Name</text>
<text class="a" x="1245.5" y="602.3" font-size="11" font-weight="bold" fill="#775351" textLength="26.43" lengthAdjust="spacingAndGlyphs">splits</text>
<text class="b" x="1209.3" y="619.1" font-size="11" fill="#262626" textLength="37.90" lengthAdjust="spacingAndGlyphs">Queued</text>
<text class="a" x="1254.5" y="619.1" font-size="11" fill="#775351" textLength="66.18" lengthAdjust="spacingAndGlyphs"><tspan font-weight="bold">43</tspan> (10.75 KB)</text>
<rect x="1209.8" y="623.4" width="85.8" height="2.8" fill="#ba554a"/>
<rect x="1315.8" y="623.4" width="85.8" height="2.8" fill="#d9e1e5"/>
<rect x="1204.3" y="795.6" width="203" height="37.3" fill="#fff" stroke="#ba554a" stroke-width="1.1" stroke-opacity="0.55" filter="url(#ds)"/>
<rect x="1204.8" y="796.1" width="202" height="16.8" fill="#f4f6f7"/>
<rect x="1204.3" y="812.8000000000001" width="203" height="0.9" fill="#c7d2d7"/>
<text class="b" x="1209.3" y="808.1" font-size="11" fill="#262626" textLength="29.40" lengthAdjust="spacingAndGlyphs">Name</text>
<text class="a" x="1245.5" y="808.1" font-size="11" font-weight="bold" fill="#775351" textLength="41.62" lengthAdjust="spacingAndGlyphs">matched</text>
<text class="b" x="1209.3" y="824.9" font-size="11" fill="#262626" textLength="37.90" lengthAdjust="spacingAndGlyphs">Queued</text>
<text class="a" x="1254.5" y="824.9" font-size="11" fill="#775351" textLength="60.21" lengthAdjust="spacingAndGlyphs"><tspan font-weight="bold">10</tspan> (2.64 KB)</text>
<rect x="1209.8" y="829.2" width="85.8" height="2.8" fill="#ba554a"/>
<rect x="1315.8" y="829.2" width="85.8" height="2.8" fill="#d9e1e5"/>
<rect x="748.2" y="788.6" width="203" height="37.3" fill="#fff" filter="url(#ds)"/>
<rect x="748.7" y="789.1" width="202" height="16.8" fill="#f4f6f7"/>
<rect x="748.2" y="805.8000000000001" width="203" height="0.9" fill="#c7d2d7"/>
<text class="b" x="753.2" y="801.1" font-size="11" fill="#262626" textLength="29.40" lengthAdjust="spacingAndGlyphs">Name</text>
<text class="a" x="789.4" y="801.1" font-size="11" font-weight="bold" fill="#775351" textLength="48.37" lengthAdjust="spacingAndGlyphs">Response</text>
<text class="b" x="753.2" y="817.9" font-size="11" fill="#262626" textLength="37.90" lengthAdjust="spacingAndGlyphs">Queued</text>
<text class="a" x="798.4" y="817.9" font-size="11" fill="#775351" textLength="50.67" lengthAdjust="spacingAndGlyphs"><tspan font-weight="bold">0</tspan> (0 bytes)</text>
<rect x="753.7" y="822.2" width="85.8" height="2.8" fill="#d9e1e5"/>
<rect x="859.7" y="822.2" width="85.8" height="2.8" fill="#d9e1e5"/>
<rect x="470.1" y="896.9" width="203" height="37.3" fill="#fff" filter="url(#ds)"/>
<rect x="470.6" y="897.4" width="202" height="16.8" fill="#f4f6f7"/>
<rect x="470.1" y="914.1" width="203" height="0.9" fill="#c7d2d7"/>
<text class="b" x="475.1" y="909.4" font-size="11" fill="#262626" textLength="29.40" lengthAdjust="spacingAndGlyphs">Name</text>
<text class="a" x="511.3" y="909.4" font-size="11" font-weight="bold" fill="#775351" textLength="33.18" lengthAdjust="spacingAndGlyphs">Failure</text>
<text class="b" x="475.1" y="926.2" font-size="11" fill="#262626" textLength="37.90" lengthAdjust="spacingAndGlyphs">Queued</text>
<text class="a" x="520.3" y="926.2" font-size="11" fill="#775351" textLength="50.67" lengthAdjust="spacingAndGlyphs"><tspan font-weight="bold">0</tspan> (0 bytes)</text>
<rect x="475.6" y="930.5" width="85.8" height="2.8" fill="#d9e1e5"/>
<rect x="581.6" y="930.5" width="85.8" height="2.8" fill="#d9e1e5"/>
<rect x="748.2" y="997.3" width="203" height="37.3" fill="#fff" filter="url(#ds)"/>
<rect x="748.7" y="997.8" width="202" height="16.8" fill="#f4f6f7"/>
<rect x="748.2" y="1014.5" width="203" height="0.9" fill="#c7d2d7"/>
<text class="b" x="753.2" y="1009.8" font-size="11" fill="#262626" textLength="29.40" lengthAdjust="spacingAndGlyphs">Name</text>
<text class="a" x="789.4" y="1009.8" font-size="11" font-weight="bold" fill="#775351" textLength="48.37" lengthAdjust="spacingAndGlyphs">Response</text>
<text class="b" x="753.2" y="1026.6" font-size="11" fill="#262626" textLength="37.90" lengthAdjust="spacingAndGlyphs">Queued</text>
<text class="a" x="798.4" y="1026.6" font-size="11" fill="#775351" textLength="67.96" lengthAdjust="spacingAndGlyphs"><tspan font-weight="bold">54</tspan> (77.46 MB)</text>
<rect x="753.7" y="1030.8999999999999" width="85.8" height="2.8" fill="#d9e1e5"/>
<rect x="859.7" y="1030.8999999999999" width="85.8" height="2.8" fill="#d9e1e5"/>
<rect x="1204.3" y="997.3" width="203" height="37.3" fill="#fff" filter="url(#ds)"/>
<rect x="1204.8" y="997.8" width="202" height="16.8" fill="#f4f6f7"/>
<rect x="1204.3" y="1014.5" width="203" height="0.9" fill="#c7d2d7"/>
<text class="b" x="1209.3" y="1009.8" font-size="11" fill="#262626" textLength="29.40" lengthAdjust="spacingAndGlyphs">Name</text>
<text class="a" x="1245.5" y="1009.8" font-size="11" font-weight="bold" fill="#775351" textLength="48.37" lengthAdjust="spacingAndGlyphs">Response</text>
<text class="b" x="1209.3" y="1026.6" font-size="11" fill="#262626" textLength="37.90" lengthAdjust="spacingAndGlyphs">Queued</text>
<text class="a" x="1254.5" y="1026.6" font-size="11" fill="#775351" textLength="50.67" lengthAdjust="spacingAndGlyphs"><tspan font-weight="bold">0</tspan> (0 bytes)</text>
<rect x="1209.8" y="1030.8999999999999" width="85.8" height="2.8" fill="#d9e1e5"/>
<rect x="1315.8" y="1030.8999999999999" width="85.8" height="2.8" fill="#d9e1e5"/>
</svg>
<div id="header" class="abs"></div>
<div id="status" class="abs"></div>
<svg width="1680" height="1050" viewBox="0 0 1680 1050">
<path d="M15 43 V18.3 H21.6 V21.2 Q24.5 17.6 28.6 17.8 Q34.2 18.2 34.2 25.5 V43 H28 V26.5 Q28 23 25 23 Q21.8 23 21.8 27 V43 Z" fill="#6f8d9a"/>
<rect x="38.9" y="18.3" width="6.2" height="24.7" fill="#6f8d9a"/><rect x="38.9" y="10" width="6.2" height="5" fill="#6f8d9a"/>
<path d="M51.3 43 V22.5 H48 V18.3 H51.3 V16 Q51.3 9.3 58.5 9.3 H61.8 V14.5 H59.5 Q57.8 14.5 57.8 16.6 V18.3 H61.8 V22.5 H57.8 V43 Z" fill="#dde4e7"/>
<rect x="65.3" y="18.3" width="6.7" height="24.7" fill="#dde4e7"/><rect x="65.3" y="10" width="6.7" height="5" fill="#dde4e7"/>
<path d="M89 8.5 Q95 17 100 25 Q104 32 101.5 38 Q98 44.5 89.5 44.5 Q80 44.5 77 37 Q75 31 79 24.5 Q84 16.5 89 8.5 Z" fill="#6f8d9a"/>
<path d="M86.5 13.5 Q78.5 25 77.5 31 Q77 37 83 40.5" fill="none" stroke="#dde4e7" stroke-width="0.8"/>
<rect x="95.5" y="31.5" width="4" height="4" fill="#6f8d9a" stroke="#aabbc3" stroke-width="0.8"/>
<rect x="100" y="31.5" width="4" height="4" fill="#6f8d9a" stroke="#aabbc3" stroke-width="0.8"/>
<rect x="90" y="37" width="4" height="4" fill="#6f8d9a" stroke="#aabbc3" stroke-width="0.8"/>
<rect x="95.5" y="37" width="4" height="4" fill="#6f8d9a" stroke="#aabbc3" stroke-width="0.8"/>
<rect x="90" y="42.5" width="4" height="4" fill="#6f8d9a" stroke="#aabbc3" stroke-width="0.8"/>
<g fill="none" stroke="#004849" stroke-width="1.6">
<rect x="137.6" y="12.4" width="28.4" height="27.4" rx="2"/>
<path d="M137.4 14 V40.6 H165" stroke-width="2.4"/>
<path d="M136.6 16 v1 M136.6 20 v1 M136.6 24 v1 M136.6 28 v1 M136.6 32 v1 M136.6 36 v1 M139 41.8 h1 M143 41.8 h1 M147 41.8 h1 M151 41.8 h1 M155 41.8 h1 M159 41.8 h1 M163 41.8 h1" stroke-width="1.2"/>
<circle cx="152.4" cy="26.1" r="8.6" stroke-width="0.8"/>
<path d="M148 19.3 A8.6 8.6 0 0 1 160 22.5" stroke-width="2.6"/>
<path d="M156.8 32.9 A8.6 8.6 0 0 1 144.8 29.7" stroke-width="2.6"/>
<path d="M204 14.6 H226.3 Q227.3 14.6 227.3 15.6 V38.8 Q227.3 39.8 226.3 39.8 H210.5"/>
<path d="M197.2 25.8 H204.9 V18.6 L215.6 29.4 L204.9 40.1 V33 H197.2 Z" stroke-width="1.5"/>
<path d="M220.6 25 V33.6" stroke-width="1.4"/>
<path d="M275.2 38.3 H259.3 Q258.4 38.3 258.4 37.3 V15.6 Q258.4 14.6 259.3 14.6 H280.7 Q281.6 14.6 281.6 15.6 V18.5"/>
<ellipse cx="264.8" cy="29.4" rx="3.3" ry="4" stroke-width="1.2"/>
<path d="M270.9 25.9 H278.4 V18.8 L288.3 29.4 L278.4 40 V32.9 H270.9 Z" stroke-width="1.5"/>
<rect x="319.5" y="13.1" width="3.8" height="3.8" rx="0.8" stroke-width="1.8"/>
<rect x="345.3" y="13.1" width="3.8" height="3.8" rx="0.8" stroke-width="1.8"/>
<rect x="319.5" y="38.3" width="3.8" height="3.8" rx="0.8" stroke-width="1.8"/>
<rect x="345.3" y="38.3" width="3.8" height="3.8" rx="0.8" stroke-width="1.8"/>
<path d="M326.20000000000005 14.9 H343.0 M326.20000000000005 40.1 H343.0 M321.5 19.3 V35.7 M347.5 19.3 V35.7" stroke-width="1.9"/>
<rect x="326.90000000000003" y="20.2" width="10.2" height="9.4" rx="2" stroke-width="1.2"/>
<rect x="332.6" y="25.2" width="10" height="9.4" rx="2" stroke-width="1.2" fill="#aabbc3"/>
<rect x="380.5" y="13.1" width="3.8" height="3.8" rx="0.8" stroke-width="1.8"/>
<rect x="406.3" y="13.1" width="3.8" height="3.8" rx="0.8" stroke-width="1.8"/>
<rect x="380.5" y="38.3" width="3.8" height="3.8" rx="0.8" stroke-width="1.8"/>
<rect x="406.3" y="38.3" width="3.8" height="3.8" rx="0.8" stroke-width="1.8"/>
<path d="M387.20000000000005 14.9 H404.0 M387.20000000000005 40.1 H404.0 M382.5 19.3 V35.7 M408.5 19.3 V35.7" stroke-width="1.9"/>
<path d="M388.6 32.2 H403.1 Q406.20000000000005 32.2 405.8 28.5 Q405.20000000000005 25.6 402.1 25.8 Q401.1 22 397.1 22.3 Q394.1 22.5 393.40000000000003 25.8 Q392.1 24.2 390.6 25.5 Q390.1 26.5 390.3 27.2 Q386.1 27.8 386.5 30.3 Q386.8 32.2 388.6 32.2 Z" stroke-width="1.6"/>
<rect x="441" y="13.5" width="5.8" height="7" rx="1.6" stroke-width="1.1"/>
<rect x="449.3" y="11.2" width="5.8" height="7" rx="1.6" stroke-width="1.1"/>
<rect x="457.7" y="11.2" width="5.8" height="7" rx="1.6" stroke-width="1.1"/>
<rect x="466" y="13.5" width="5.8" height="7" rx="1.6" stroke-width="1.1"/>
<path d="M446 20.5 L452.5 23.5 M452 18.3 L455 23.2 M460.7 18.3 L457.5 23.2 M467 20.5 L460.5 23.5" stroke-width="0.9"/>
<path d="M450.5 24.5 Q456.4 27.5 462.3 24.5" stroke-width="1"/>
<path d="M453.5 37.5 V42.3 H459.6 V37.5" stroke-width="1.3"/>
</g>
<g fill="#004849">
<path d="M451.8 22.6 Q456.5 24.8 461.3 22.6 L460 25.2 Q456.5 26.3 453 25.2 Z"/>
<rect x="454.6" y="26.3" width="3.6" height="7.5"/><path d="M450.9 33 H462 L456.4 38.6 Z"/>
<rect x="501.8" y="11" width="15.2" height="6.9" rx="0.6"/><rect x="517.4" y="24" width="15.6" height="6.7" rx="0.6"/><rect x="508.8" y="36.2" width="15.4" height="6.6" rx="0.6"/>
</g>
<path d="M510 17.8 L524 24.1 M525.6 30.6 L517.3 36.3" stroke="#004849" stroke-width="0.9"/>
<g stroke="#004849" stroke-width="2.5" stroke-linecap="round" fill="none"><path d="M563.8 13.7 H579.6 M563.8 18.2 H583 M563.8 22.5 H581.2 M563.8 26.8 H573.6"/></g>
<path d="M576 41.8 L577.8 34.4 L593.8 16.2 L594.2 18.6 L580 34.9 M578.8 40.6 L583.5 39.4 L594 27.6 M586 33.8 L594 24.8" fill="none" stroke="#004849" stroke-width="1.3"/>
<path d="M575.8 42 L577.5 36.8 L580.8 40.4 Z" fill="#004849"/>
<text class="b" x="1616.8" y="22.9" font-size="12" fill="#775351" text-anchor="end" textLength="36.10" lengthAdjust="spacingAndGlyphs">admin</text>
<text class="a" x="1616.8" y="43.7" font-size="12" fill="#004849" text-anchor="end" textLength="47.50" lengthAdjust="spacingAndGlyphs">LOG OUT</text>
<rect x="1569.3" y="44.6" width="47.5" height="1" fill="#dfe6e9"/>
<rect x="1635" y="16.2" width="27" height="4.6" rx="1.8" fill="#004849"/>
<rect x="1635" y="25.5" width="27" height="4.6" rx="1.8" fill="#004849"/>
<rect x="1635" y="34.5" width="27" height="4.6" rx="1.8" fill="#004849"/>
</svg>
<svg width="1680" height="1050" viewBox="0 0 1680 1050">
<text class="a" x="52.9" y="76.9" font-size="15" fill="#775351" textLength="28.10" lengthAdjust="spacingAndGlyphs">1 / 1</text>
<text class="a" x="160.2" y="76.9" font-size="15" fill="#775351" textLength="7.90" lengthAdjust="spacingAndGlyphs">3</text>
<text class="a" x="241.4" y="76.9" font-size="15" fill="#775351" textLength="115.60" lengthAdjust="spacingAndGlyphs">208 / 159.11 MB</text>
<text class="a" x="427.1" y="76.9" font-size="15" fill="#775351" textLength="8.00" lengthAdjust="spacingAndGlyphs">0</text>
<text class="a" x="511.3" y="76.9" font-size="15" fill="#775351" textLength="8.00" lengthAdjust="spacingAndGlyphs">0</text>
<text class="a" x="589.4" y="76.9" font-size="15" fill="#775351" textLength="16.80" lengthAdjust="spacingAndGlyphs">15</text>
<text class="a" x="677.2" y="76.9" font-size="15" fill="#775351" textLength="8.00" lengthAdjust="spacingAndGlyphs">0</text>
<text class="a" x="759.4" y="76.9" font-size="15" fill="#775351" textLength="8.00" lengthAdjust="spacingAndGlyphs">0</text>
<text class="a" x="843.4" y="76.9" font-size="15" fill="#775351" textLength="8.00" lengthAdjust="spacingAndGlyphs">0</text>
<text class="a" x="924.4" y="76.9" font-size="15" fill="#775351" textLength="8.00" lengthAdjust="spacingAndGlyphs">0</text>
<text class="a" x="1004.4" y="76.9" font-size="15" fill="#775351" textLength="8.00" lengthAdjust="spacingAndGlyphs">0</text>
<text class="a" x="1083.4" y="76.9" font-size="15" fill="#775351" textLength="8.00" lengthAdjust="spacingAndGlyphs">0</text>
<text class="a" x="1163.4" y="76.9" font-size="15" fill="#775351" textLength="8.00" lengthAdjust="spacingAndGlyphs">0</text>
<text class="a" x="1237.1" y="76.9" font-size="15" fill="#775351" textLength="8.00" lengthAdjust="spacingAndGlyphs">0</text>
<text class="a" x="1316.6" y="76.9" font-size="15" fill="#775351" textLength="97.10" lengthAdjust="spacingAndGlyphs">13:01:28 GMT</text>
<path d="M33.30 64.50 L37.54 66.95 L37.54 71.85 L33.30 74.30 L29.06 71.85 L29.06 66.95 Z" fill="#8fa8b3" stroke="#dfe6e9" stroke-width="0.8"/><path d="M29.06 66.95 L33.30 69.40 L37.54 66.95 M33.30 69.40 V74.30" fill="none" stroke="#dfe6e9" stroke-width="0.8"/>
<path d="M29.00 70.30 L33.24 72.75 L33.24 77.65 L29.00 80.10 L24.76 77.65 L24.76 72.75 Z" fill="#8fa8b3" stroke="#dfe6e9" stroke-width="0.8"/><path d="M24.76 72.75 L29.00 75.20 L33.24 72.75 M29.00 75.20 V80.10" fill="none" stroke="#dfe6e9" stroke-width="0.8"/>
<path d="M37.60 70.30 L41.84 72.75 L41.84 77.65 L37.60 80.10 L33.36 77.65 L33.36 72.75 Z" fill="#8fa8b3" stroke="#dfe6e9" stroke-width="0.8"/><path d="M33.36 72.75 L37.60 75.20 L41.84 72.75 M37.60 75.20 V80.10" fill="none" stroke="#dfe6e9" stroke-width="0.8"/>
<circle cx="135.4" cy="66.4" r="1.8" fill="none" stroke="#8fa8b3" stroke-width="0.9"/>
<circle cx="140.5" cy="66.4" r="2.2" fill="#8fa8b3"/>
<circle cx="145.6" cy="66.4" r="1.8" fill="none" stroke="#8fa8b3" stroke-width="0.9"/>
<circle cx="135.4" cy="71.5" r="2.2" fill="#8fa8b3"/>
<circle cx="140.5" cy="71.5" r="2.2" fill="#8fa8b3"/>
<circle cx="145.6" cy="71.5" r="1.8" fill="none" stroke="#8fa8b3" stroke-width="0.9"/>
<circle cx="135.4" cy="76.60000000000001" r="1.8" fill="none" stroke="#8fa8b3" stroke-width="0.9"/>
<circle cx="140.5" cy="76.60000000000001" r="2.2" fill="#8fa8b3"/>
<circle cx="145.6" cy="76.60000000000001" r="2.2" fill="#8fa8b3"/>
<rect x="217.5" y="65.5" width="2.2" height="1.7" fill="#8fa8b3"/><rect x="221" y="65.5" width="11" height="1.7" fill="#8fa8b3"/>
<rect x="217.5" y="68.25" width="2.2" height="1.7" fill="#8fa8b3"/><rect x="221" y="68.25" width="11" height="1.7" fill="#8fa8b3"/>
<rect x="217.5" y="71.0" width="2.2" height="1.7" fill="#8fa8b3"/><rect x="221" y="71.0" width="11" height="1.7" fill="#8fa8b3"/>
<rect x="217.5" y="73.75" width="2.2" height="1.7" fill="#8fa8b3"/><rect x="221" y="73.75" width="11" height="1.7" fill="#8fa8b3"/>
<rect x="217.5" y="76.5" width="2.2" height="1.7" fill="#8fa8b3"/><rect x="221" y="76.5" width="11" height="1.7" fill="#8fa8b3"/>
<g fill="none" stroke="#8fa8b3" stroke-width="1"><circle cx="411.7" cy="71.6" r="6"/><circle cx="411.7" cy="71.6" r="3.6"/></g><circle cx="411.7" cy="71.6" r="1.7" fill="#8fa8b3"/>
<g fill="none" stroke="#8fa8b3" stroke-width="1"><circle cx="492.2" cy="71.6" r="6"/><circle cx="492.2" cy="71.6" r="3.6"/><path d="M485.2 64.6 L499.2 78.6" stroke-width="1.2"/></g>
<path d="M569 65.4 L580.5 71.6 L569 77.8 Z" fill="#7dc7a0"/>
<rect x="656.1" y="65.1" width="12.9" height="12.8" fill="#8fa8b3"/>
<path d="M742.6 64.4 L750.2 77.9 H735 Z" fill="#8fa8b3"/><rect x="741.9" y="68.8" width="1.5" height="5" fill="#e3e8eb"/><rect x="741.9" y="75" width="1.5" height="1.5" fill="#e3e8eb"/>
<path d="M825 64.5 L821 71 H824.5 L822 78.6 L828.6 69.8 H825.2 L827.5 64.5 Z" fill="#8fa8b3"/><path d="M817.2 65 L830.2 78.6" stroke="#8fa8b3" stroke-width="1.1"/>
<path d="M902 71.8 L906.2 76.2 L914.6 66.8" fill="none" stroke="#8fa8b3" stroke-width="2.6"/>
<g stroke="#8fa8b3" stroke-width="2.6"><path d="M988.6 64.6 V78.4 M982.6 68.1 L994.6 75 M982.6 75 L994.6 68.1"/></g>
<circle cx="1068.4" cy="71.6" r="6.6" fill="#8fa8b3"/><path d="M1068.4 75.8 V68 M1065 71 L1068.4 67.6 L1071.8 71" fill="none" stroke="#e3e8eb" stroke-width="1.6"/>
<circle cx="1147.5" cy="71.6" r="6.6" fill="#8fa8b3"/><rect x="1146.6" y="67" width="1.9" height="5.6" fill="#e3e8eb"/><rect x="1146.6" y="74" width="1.9" height="1.9" fill="#e3e8eb"/>
<text class="a" x="1221.0" y="77.2" font-size="14.5" font-weight="bold" fill="#8fa8b3" textLength="7.60" lengthAdjust="spacingAndGlyphs" stroke="#8fa8b3" stroke-width="0.7">?</text>
<g fill="none" stroke="#8fa8b3" stroke-width="2.4"><path d="M1296.2 72.6 A5.3 5.3 0 0 1 1305.6 68.4"/><path d="M1306.8 71 A5.3 5.3 0 0 1 1297.4 75.2"/></g><path d="M1303.2 69.6 L1308.4 64.4 L1308.4 70.2 Z M1299.8 74 L1294.6 79.2 L1294.6 73.4 Z" fill="#8fa8b3"/>
<rect x="1616" y="56" width="1" height="32" fill="#c7d2d7"/>
<circle cx="1631.4" cy="70.8" r="5.2" fill="none" stroke="#004849" stroke-width="2.4"/><path d="M1635.4 74.8 L1639.2 78.6" stroke="#004849" stroke-width="2.6" stroke-linecap="round"/>
<rect x="1648.8" y="56" width="31.2" height="32" fill="#728e9b"/>
<path d="M1658.6 65.8 H1670.2 V75 L1667.6 77.4 H1658.6 Z" fill="none" stroke="#fff" stroke-width="1.1"/><path d="M1667.4 77.4 V74.8 H1670.2" fill="none" stroke="#fff" stroke-width="0.9"/>
</svg>
<div id="crumbs" class="abs"></div>
<svg width="1680" height="1050" viewBox="0 0 1680 1050">
<text class="a" x="15.4" y="1040.0" font-size="13" font-weight="bold" fill="#004849" textLength="50.80" lengthAdjust="spacingAndGlyphs">NiFi Flow</text>
<rect x="-1" y="110.5" width="33.3" height="32.6" fill="#f9fafb" stroke="#c7d2d7" stroke-width="1" filter="url(#ds)"/>
<rect x="-1" y="146.5" width="33.3" height="32.8" fill="#f9fafb" stroke="#c7d2d7" stroke-width="1" filter="url(#ds)"/>
<circle cx="14.1" cy="128.2" r="7" fill="none" stroke="#004849" stroke-width="2.2"/>
<path d="M17.2 124.2 L11.4 128.4 L11.6 132 L16.6 131.8 Z" fill="#004849"/><path d="M15.6 126.6 L12.8 129.2 L12.9 130.9 Z" fill="#a3b5bd"/>
<path d="M11.3 157.5 Q12.8 154.8 14.3 157.2 V161.6 Q20.2 161.8 21.6 163.8 L20.8 172 H12.6 L7.2 165.4 Q6.8 163.4 9 163.6 L11.3 165.6 Z" fill="none" stroke="#004849" stroke-width="1.1"/>
<rect x="12.2" y="169.8" width="8.8" height="2.8" fill="#004849"/>
</svg>
<div id="glass" class="abs"></div>
<div id="dialog" class="abs"></div>
<svg width="1680" height="1050" viewBox="0 0 1680 1050">
<rect x="440" y="245" width="800" height="56" fill="#728e9b"/>
<text class="b" x="460.2" y="279.9" font-size="20" font-weight="bold" fill="#fff" textLength="147.80" lengthAdjust="spacingAndGlyphs">Processor Details</text>
<rect x="440" y="301" width="800" height="32" fill="#e3e8eb"/>
<path d="M455 310 L466.5 316 L455 322 Z" fill="#7dc7a0"/>
<text class="a" x="470.3" y="321.9" font-size="12" font-weight="bold" fill="#775351" textLength="45.20" lengthAdjust="spacingAndGlyphs">Running</text>
<rect x="1112" y="310.9" width="12" height="13.7" fill="#004849"/>
<circle cx="1122.0" cy="317.7" r="4.2" fill="#004849" stroke="#004849" stroke-width="1.6"/><rect x="1125.43" y="318.48" width="2.2" height="2.2" fill="#004849" stroke="#004849" stroke-width="1.6" transform="rotate(22.5 1126.53 319.58)"/><rect x="1122.78" y="321.13" width="2.2" height="2.2" fill="#004849" stroke="#004849" stroke-width="1.6" transform="rotate(67.5 1123.88 322.23)"/><rect x="1119.02" y="321.13" width="2.2" height="2.2" fill="#004849" stroke="#004849" stroke-width="1.6" transform="rotate(112.5 1120.12 322.23)"/><rect x="1116.37" y="318.48" width="2.2" height="2.2" fill="#004849" stroke="#004849" stroke-width="1.6" transform="rotate(157.5 1117.47 319.58)"/><rect x="1116.37" y="314.72" width="2.2" height="2.2" fill="#004849" stroke="#004849" stroke-width="1.6" transform="rotate(202.5 1117.47 315.82)"/><rect x="1119.02" y="312.07" width="2.2" height="2.2" fill="#004849" stroke="#004849" stroke-width="1.6" transform="rotate(247.5 1120.12 313.17)"/><rect x="1122.78" y="312.07" width="2.2" height="2.2" fill="#004849" stroke="#004849" stroke-width="1.6" transform="rotate(292.5 1123.88 313.17)"/><rect x="1125.43" y="314.72" width="2.2" height="2.2" fill="#004849" stroke="#004849" stroke-width="1.6" transform="rotate(337.5 1126.53 315.82)"/>
<circle cx="1122.0" cy="317.7" r="4.2" fill="#fff"/><rect x="1125.43" y="318.48" width="2.2" height="2.2" fill="#fff" transform="rotate(22.5 1126.53 319.58)"/><rect x="1122.78" y="321.13" width="2.2" height="2.2" fill="#fff" transform="rotate(67.5 1123.88 322.23)"/><rect x="1119.02" y="321.13" width="2.2" height="2.2" fill="#fff" transform="rotate(112.5 1120.12 322.23)"/><rect x="1116.37" y="318.48" width="2.2" height="2.2" fill="#fff" transform="rotate(157.5 1117.47 319.58)"/><rect x="1116.37" y="314.72" width="2.2" height="2.2" fill="#fff" transform="rotate(202.5 1117.47 315.82)"/><rect x="1119.02" y="312.07" width="2.2" height="2.2" fill="#fff" transform="rotate(247.5 1120.12 313.17)"/><rect x="1122.78" y="312.07" width="2.2" height="2.2" fill="#fff" transform="rotate(292.5 1123.88 313.17)"/><rect x="1125.43" y="314.72" width="2.2" height="2.2" fill="#fff" transform="rotate(337.5 1126.53 315.82)"/>
<circle cx="1122.0" cy="317.7" r="2.1" fill="#004849"/>
<text class="a" x="1131.2" y="322.7" font-size="11" font-weight="bold" fill="#004849" textLength="101.00" lengthAdjust="spacingAndGlyphs">STOP &amp; CONFIGURE</text>
<rect x="460.5" y="349.5" width="90" height="32" fill="#e3e8eb" stroke="#cfdbdf" stroke-width="1"/>
<rect x="553.5" y="349.5" width="104.60000000000002" height="32" fill="#e3e8eb" stroke="#cfdbdf" stroke-width="1"/>
<rect x="765.7" y="349.5" width="116.39999999999998" height="32" fill="#e3e8eb" stroke="#cfdbdf" stroke-width="1"/>
<rect x="885.5" y="349.5" width="99.79999999999995" height="32" fill="#e3e8eb" stroke="#cfdbdf" stroke-width="1"/>
<rect x="460" y="380" width="760" height="1.6" fill="#004849"/>
<rect x="661.3" y="349" width="101.6" height="33" fill="#fff"/>
<path d="M661.9 381.2 V349.7 H762.3 V381.2" fill="none" stroke="#004849" stroke-width="1.5"/>
<text class="a" x="482.1" y="371.2" font-size="11" font-weight="bold" fill="#004849" textLength="47.00" lengthAdjust="spacingAndGlyphs">SETTINGS</text>
<text class="a" x="575.0" y="371.2" font-size="11" font-weight="bold" fill="#004849" textLength="61.50" lengthAdjust="spacingAndGlyphs">SCHEDULING</text>
<text class="a" x="683.3" y="371.2" font-size="11" font-weight="bold" fill="#004849" textLength="57.70" lengthAdjust="spacingAndGlyphs">PROPERTIES</text>
<text class="a" x="787.2" y="371.2" font-size="11" font-weight="bold" fill="#004849" textLength="73.40" lengthAdjust="spacingAndGlyphs">RELATIONSHIPS</text>
<text class="a" x="907.3" y="371.2" font-size="11" font-weight="bold" fill="#004849" textLength="56.70" lengthAdjust="spacingAndGlyphs">COMMENTS</text>
<text class="a" x="466.0" y="410.8" font-size="12" font-weight="bold" fill="#262626" textLength="73.20" lengthAdjust="spacingAndGlyphs">Required field</text>
<rect x="460" y="424" width="760" height="32" fill="#728e9b"/>
<text class="a" x="464.5" y="444.7" font-size="12" font-weight="bold" fill="#fff" textLength="45.50" lengthAdjust="spacingAndGlyphs">Property</text>
<text class="a" x="802.1" y="444.7" font-size="12" font-weight="bold" fill="#fff" textLength="30.40" lengthAdjust="spacingAndGlyphs">Value</text>
<defs><clipPath id="tclip"><rect x="460" y="456" width="760" height="296.5"/></clipPath></defs>
<g clip-path="url(#tclip)">
<rect x="460" y="456" width="760" height="24" fill="#ffffff"/>
<rect x="460" y="479" width="760" height="1" fill="#cdd9de"/>
<text class="a" x="470.1" y="473.2" font-size="12" font-weight="bold" fill="#262626" textLength="73.50" lengthAdjust="spacingAndGlyphs">Kafka Brokers</text>
<circle cx="785.1" cy="468.6" r="5.4" fill="#004849"/>
<text class="a" x="785.2" y="472.6" font-size="10.5" font-weight="bold" fill="#fff" text-anchor="middle">?</text>
<text class="a" x="809.3" y="473.2" font-size="12" font-weight="bold" fill="#262626" textLength="57.80" lengthAdjust="spacingAndGlyphs">kafka:9092</text>
<rect x="460" y="480" width="760" height="24" fill="#f4f6f7"/>
<rect x="460" y="503" width="760" height="1" fill="#cdd9de"/>
<text class="a" x="470.1" y="497.2" font-size="12" font-weight="bold" fill="#262626" textLength="61.70" lengthAdjust="spacingAndGlyphs">Topic Name</text>
<circle cx="785.1" cy="492.6" r="5.4" fill="#004849"/>
<text class="a" x="785.2" y="496.6" font-size="10.5" font-weight="bold" fill="#fff" text-anchor="middle">?</text>
<text class="a" x="809.3" y="497.2" font-size="12" font-weight="bold" fill="#262626" textLength="42.40" lengthAdjust="spacingAndGlyphs">stations</text>
<rect x="460" y="504" width="760" height="24" fill="#ffffff"/>
<rect x="460" y="527" width="760" height="1" fill="#cdd9de"/>
<text class="a" x="470.1" y="521.2" font-size="12" font-weight="bold" fill="#262626" textLength="78.00" lengthAdjust="spacingAndGlyphs">Record Reader</text>
<circle cx="785.1" cy="516.6" r="5.4" fill="#004849"/>
<text class="a" x="785.2" y="520.6" font-size="10.5" font-weight="bold" fill="#fff" text-anchor="middle">?</text>
<text class="a" x="809.3" y="521.2" font-size="12" font-weight="bold" fill="#262626" textLength="86.70" lengthAdjust="spacingAndGlyphs">JsonTreeReader</text>
<path d="M1147 516.2 H1155.5" stroke="#004849" stroke-width="1.8"/><path d="M1154.5 513.6 L1159 516.2 L1154.5 518.8 Z" fill="#004849"/>
<rect x="460" y="528" width="760" height="24" fill="#f4f6f7"/>
<rect x="460" y="551" width="760" height="1" fill="#cdd9de"/>
<text class="a" x="470.1" y="545.2" font-size="12" font-weight="bold" fill="#262626" textLength="73.00" lengthAdjust="spacingAndGlyphs">Record Writer</text>
<circle cx="785.1" cy="540.6" r="5.4" fill="#004849"/>
<text class="a" x="785.2" y="544.6" font-size="10.5" font-weight="bold" fill="#fff" text-anchor="middle">?</text>
<text class="a" x="809.3" y="545.2" font-size="12" font-weight="bold" fill="#262626" textLength="113.80" lengthAdjust="spacingAndGlyphs">JsonRecordSetWriter</text>
<path d="M1147 540.2 H1155.5" stroke="#004849" stroke-width="1.8"/><path d="M1154.5 537.6 L1159 540.2 L1154.5 542.8 Z" fill="#004849"/>
<rect x="460" y="552" width="760" height="24" fill="#ffffff"/>
<rect x="460" y="575" width="760" height="1" fill="#cdd9de"/>
<text class="a" x="470.1" y="569.2" font-size="12" font-weight="bold" fill="#262626" textLength="91.70" lengthAdjust="spacingAndGlyphs">Use Transactions</text>
<circle cx="785.1" cy="564.6" r="5.4" fill="#004849"/>
<text class="a" x="785.2" y="568.6" font-size="10.5" font-weight="bold" fill="#fff" text-anchor="middle">?</text>
<text class="a" x="809.3" y="569.2" font-size="12" font-weight="bold" fill="#262626" textLength="24.70" lengthAdjust="spacingAndGlyphs">false</text>
<rect x="460" y="576" width="760" height="24" fill="#f4f6f7"/>
<rect x="460" y="599" width="760" height="1" fill="#cdd9de"/>
<text class="a" x="470.1" y="593.2" font-size="12" font-weight="bold" fill="#262626" textLength="82.60" lengthAdjust="spacingAndGlyphs">Failure Strategy</text>
<circle cx="785.1" cy="588.6" r="5.4" fill="#004849"/>
<text class="a" x="785.2" y="592.6" font-size="10.5" font-weight="bold" fill="#fff" text-anchor="middle">?</text>
<text class="a" x="809.3" y="593.2" font-size="12" font-weight="bold" fill="#262626" textLength="84.70" lengthAdjust="spacingAndGlyphs">Route to Failure</text>
<rect x="460" y="600" width="760" height="24" fill="#ffffff"/>
<rect x="460" y="623" width="760" height="1" fill="#cdd9de"/>
<text class="a" x="470.1" y="617.2" font-size="12" font-weight="bold" fill="#262626" textLength="108.80" lengthAdjust="spacingAndGlyphs">Delivery Guarantee</text>
<circle cx="785.1" cy="612.6" r="5.4" fill="#004849"/>
<text class="a" x="785.2" y="616.6" font-size="10.5" font-weight="bold" fill="#fff" text-anchor="middle">?</text>
<text class="a" x="809.3" y="617.2" font-size="12" font-weight="bold" fill="#262626" textLength="157.60" lengthAdjust="spacingAndGlyphs">Guarantee Replicated Delivery</text>
<rect x="460" y="624" width="760" height="24" fill="#f4f6f7"/>
<rect x="460" y="647" width="760" height="1" fill="#cdd9de"/>
<text class="a" x="470.1" y="641.2" font-size="12" fill="#262626" textLength="203.40" lengthAdjust="spacingAndGlyphs">Attributes to Send as Headers (Regex)</text>
<circle cx="785.1" cy="636.6" r="5.4" fill="#004849"/>
<text class="a" x="785.2" y="640.6" font-size="10.5" font-weight="bold" fill="#fff" text-anchor="middle">?</text>
<text class="a" x="809.3" y="641.2" font-size="12" fill="#aaaaaa" textLength="66.10" lengthAdjust="spacingAndGlyphs">No value set</text>
<rect x="460" y="648" width="760" height="24" fill="#ffffff"/>
<rect x="460" y="671" width="760" height="1" fill="#cdd9de"/>
<text class="a" x="470.1" y="665.2" font-size="12" fill="#262626" textLength="143.10" lengthAdjust="spacingAndGlyphs">Message Header Encoding</text>
<circle cx="785.1" cy="660.6" r="5.4" fill="#004849"/>
<text class="a" x="785.2" y="664.6" font-size="10.5" font-weight="bold" fill="#fff" text-anchor="middle">?</text>
<text class="a" x="809.3" y="665.2" font-size="12" fill="#262626" textLength="31.10" lengthAdjust="spacingAndGlyphs">UTF-8</text>
<rect x="460" y="672" width="760" height="24" fill="#f4f6f7"/>
<rect x="460" y="695" width="760" height="1" fill="#cdd9de"/>
<text class="a" x="470.1" y="689.2" font-size="12" font-weight="bold" fill="#262626" textLength="91.70" lengthAdjust="spacingAndGlyphs">Security Protocol</text>
<circle cx="785.1" cy="684.6" r="5.4" fill="#004849"/>
<text class="a" x="785.2" y="688.6" font-size="10.5" font-weight="bold" fill="#fff" text-anchor="middle">?</text>
<text class="a" x="809.3" y="689.2" font-size="12" font-weight="bold" fill="#262626" textLength="63.60" lengthAdjust="spacingAndGlyphs">PLAINTEXT</text>
<rect x="460" y="696" width="760" height="24" fill="#ffffff"/>
<rect x="460" y="719" width="760" height="1" fill="#cdd9de"/>
<text class="a" x="470.1" y="713.2" font-size="12" font-weight="bold" fill="#262626" textLength="103.70" lengthAdjust="spacingAndGlyphs">SASL Mechanism</text>
<circle cx="785.1" cy="708.6" r="5.4" fill="#004849"/>
<text class="a" x="785.2" y="712.6" font-size="10.5" font-weight="bold" fill="#fff" text-anchor="middle">?</text>
<text class="a" x="809.3" y="713.2" font-size="12" font-weight="bold" fill="#262626" textLength="40.70" lengthAdjust="spacingAndGlyphs">GSSAPI</text>
<rect x="460" y="720" width="760" height="24" fill="#f4f6f7"/>
<rect x="460" y="743" width="760" height="1" fill="#cdd9de"/>
<text class="a" x="470.1" y="737.2" font-size="12" fill="#262626" textLength="162.80" lengthAdjust="spacingAndGlyphs">Kerberos Credentials Service</text>
<circle cx="785.1" cy="732.6" r="5.4" fill="#004849"/>
<text class="a" x="785.2" y="736.6" font-size="10.5" font-weight="bold" fill="#fff" text-anchor="middle">?</text>
<text class="a" x="809.3" y="737.2" font-size="12" fill="#aaaaaa" textLength="66.10" lengthAdjust="spacingAndGlyphs">No value set</text>
<rect x="460" y="744" width="760" height="24" fill="#ffffff"/>
<rect x="460" y="767" width="760" height="1" fill="#cdd9de"/>
<text class="a" x="470.1" y="761.2" font-size="12" fill="#262626" textLength="109.24" lengthAdjust="spacingAndGlyphs">Kerberos User Service</text>
<circle cx="785.1" cy="756.6" r="5.4" fill="#004849"/>
<text class="a" x="785.2" y="760.6" font-size="10.5" font-weight="bold" fill="#fff" text-anchor="middle">?</text>
<text class="a" x="809.3" y="761.2" font-size="12" fill="#aaaaaa" textLength="66.10" lengthAdjust="spacingAndGlyphs">No value set</text>
<rect x="797.8" y="456" width="1.2" height="300" fill="#cdd9de"/>
<rect x="1135.8" y="456" width="1.2" height="300" fill="#cdd9de"/>
</g>
<rect x="1134" y="773" width="106" height="32" fill="#728e9b"/>
<text class="a" x="1180.4" y="793.9" font-size="11" font-weight="bold" fill="#fff" textLength="14.60" lengthAdjust="spacingAndGlyphs">OK</text>
</svg>
</body></html>
